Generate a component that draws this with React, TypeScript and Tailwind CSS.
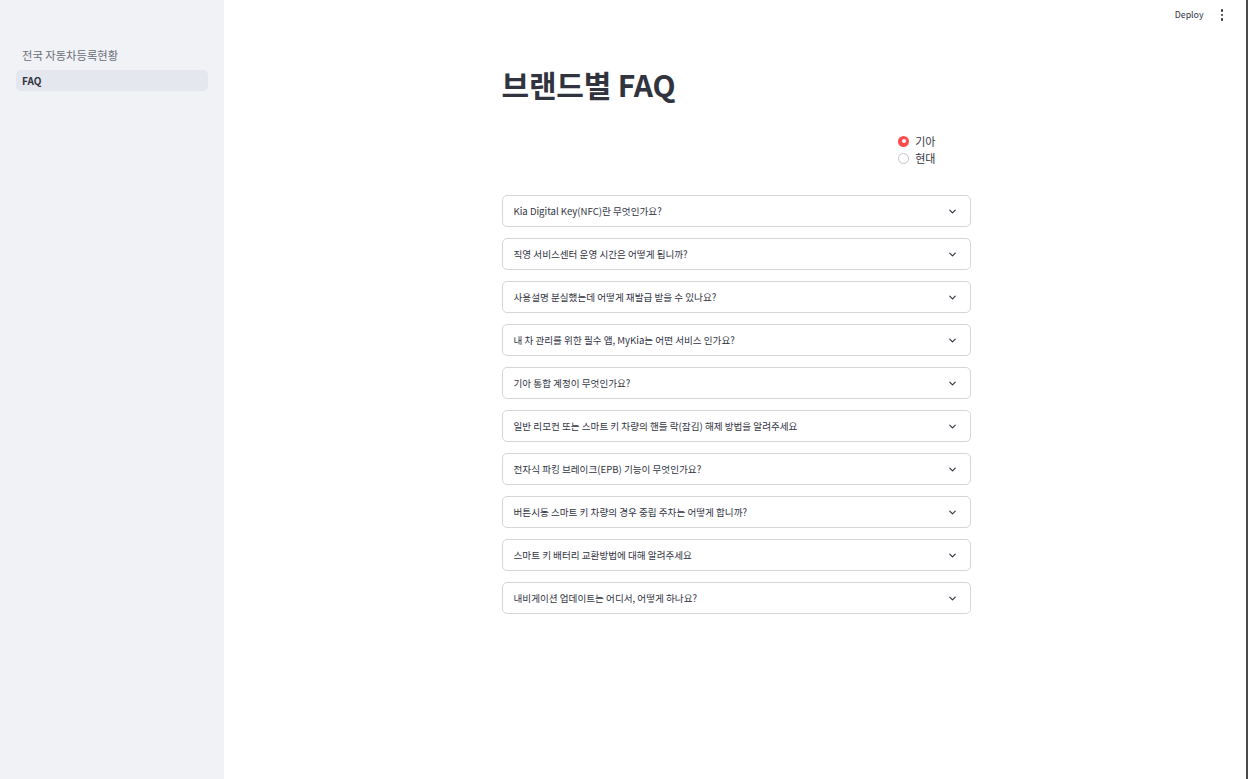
import { ChevronDown } from 'lucide-react';

const faqs = [
  'Kia Digital Key(NFC)란 무엇인가요?',
  '직영 서비스센터 운영 시간은 어떻게 됩니까?',
  '사용설명 분실했는데 어떻게 재발급 받을 수 있나요?',
  '내 차 관리를 위한 필수 앱, MyKia는 어떤 서비스 인가요?',
  '기아 통합 계정이 무엇인가요?',
  '일반 리모컨 또는 스마트 키 차량의 핸들 락(잠김) 해제 방법을 알려주세요',
  '전자식 파킹 브레이크(EPB) 기능이 무엇인가요?',
  '버튼시동 스마트 키 차량의 경우 중립 주차는 어떻게 합니까?',
  '스마트 키 배터리 교환방법에 대해 알려주세요',
  '내비게이션 업데이트는 어디서, 어떻게 하나요?',
];

function App() {
  return (
    <div
      className="flex h-[779px] w-[1248px] overflow-hidden bg-white text-[#31333f]"
      style={{ fontFamily: '"Noto Sans CJK KR", "Noto Sans", sans-serif' }}
    >
      {/* sidebar */}
      <aside className="w-[224px] shrink-0 bg-[#f0f2f6] px-4 pt-[45px]">
        <div className="px-[6px] py-[2px] text-[11.3px] leading-[17px] text-[#6b6e77]">전국 자동차등록현황</div>
        <div className="mt-[4px] rounded-[5px] bg-[#e4e7ee] px-[6px] py-[3px] text-[10px] font-bold leading-[15px]">FAQ</div>
      </aside>

      {/* main */}
      <main className="relative flex-1">
        <div className="flex items-center justify-end gap-[17px] pr-[25px] pt-[8px]">
          <span className="text-[8.8px] leading-[14px] text-[#31333f]">Deploy</span>
          <span className="flex flex-col gap-[2px]">
            <span className="h-[2.5px] w-[2.5px] rounded-full bg-[#31333f]" />
            <span className="h-[2.5px] w-[2.5px] rounded-full bg-[#31333f]" />
            <span className="h-[2.5px] w-[2.5px] rounded-full bg-[#31333f]" />
          </span>
        </div>

        <div className="mx-auto w-[469px] pt-[42px]">
          <h1 className="text-[30px] font-bold leading-[40px] tracking-[-0.2px]">브랜드별 FAQ</h1>

          <div className="mt-[30px] flex justify-end pr-[35px]">
            <div className="flex flex-col gap-[3px]">
              <label className="flex items-center gap-[6px] text-[11px] leading-[14px]">
                <span className="flex h-[11px] w-[11px] items-center justify-center rounded-full bg-[#ff4b4b]">
                  <span className="h-[4px] w-[4px] rounded-full bg-white" />
                </span>
                기아
              </label>
              <label className="flex items-center gap-[6px] text-[11px] leading-[14px]">
                <span className="h-[11px] w-[11px] rounded-full border border-[#c4c6cc] bg-white" />
                현대
              </label>
            </div>
          </div>

          <div className="mt-[30px] flex flex-col gap-[11px]">
            {faqs.map((q, i) => (
              <div
                key={i}
                className="flex h-[32px] items-center justify-between rounded-[5px] border border-[#d6d6d9] pl-[11px] pr-[12px]"
              >
                <span className="text-[9.6px] text-[#31333f]">{q}</span>
                <ChevronDown size={11} strokeWidth={2.5} className="text-[#31333f]" />
              </div>
            ))}
          </div>
        </div>

        <div className="absolute right-0 top-0 h-full w-[2px] bg-[#4a4a4a]" />
      </main>
    </div>
  );
}

export default App;
